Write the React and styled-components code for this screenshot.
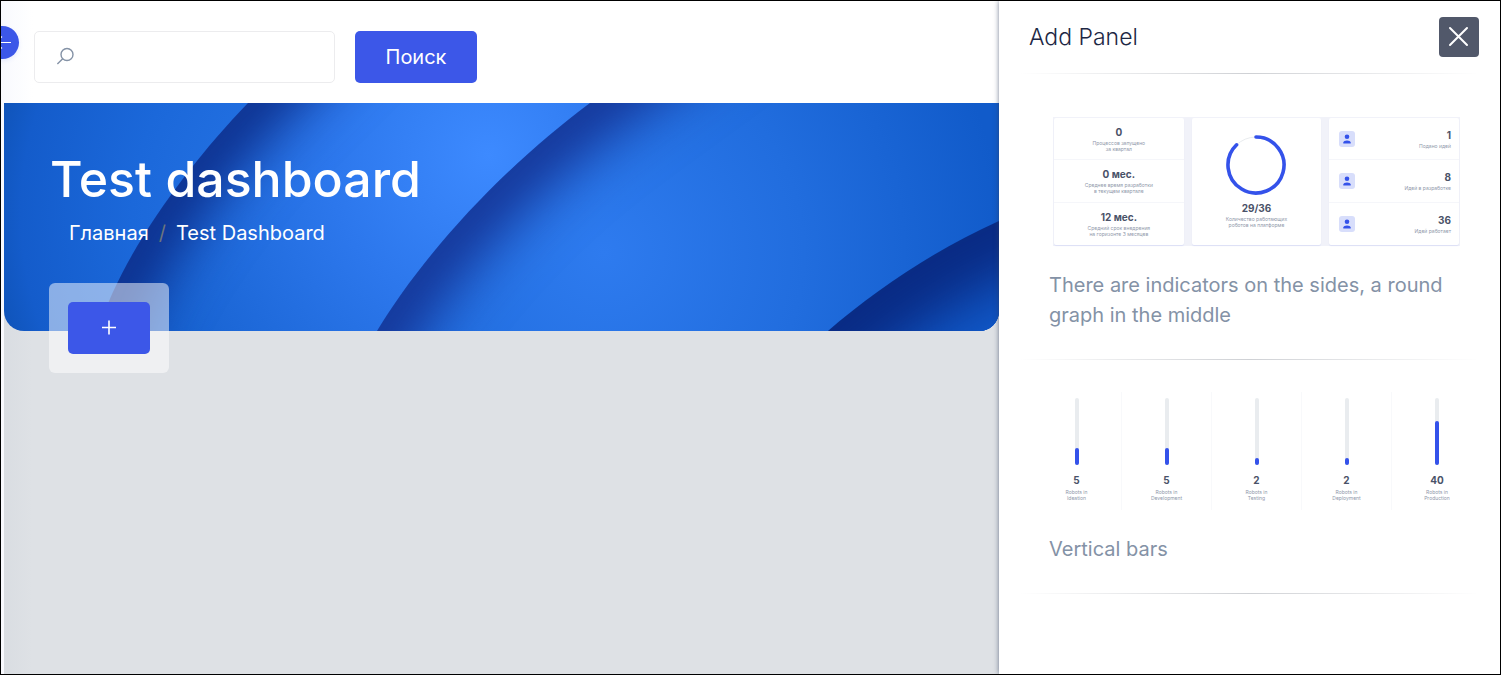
import React from "react";
import styled, { createGlobalStyle } from "styled-components";

const GlobalStyle = createGlobalStyle`
  *, *::before, *::after { box-sizing: border-box; }
  body {
    margin: 0;
    font-family: Inter, "Liberation Sans", sans-serif;
    font-size: 20px;
    line-height: 30px;
    color: #3c4858;
    background: #fff;
  }
  button, input { font: inherit; }
  h1, h2, p, ol, ul, dl, dd { margin: 0; padding: 0; }
  ol, ul { list-style: none; }
`;

const Page = styled.div`
  position: relative;
  display: grid;
  grid-template-columns: minmax(0, 1fr) 501px;
  min-height: 100vh;
  border: 1px solid #000;
  overflow: hidden;
`;

const Main = styled.main`
  display: flex;
  flex-direction: column;
  min-width: 0;
  padding-left: 3px;
  background: linear-gradient(90deg, #f8f9fe, #fff 32px);
`;

const SidebarToggle = styled.button`
  position: absolute;
  top: 25px;
  left: -15px;
  width: 33px;
  height: 33px;
  padding: 0;
  border: 0;
  border-radius: 50%;
  background: #3c57e8;
  color: #fff;
  box-shadow: 0 2px 4px rgba(60, 87, 232, 0.1);
  svg { display: block; }
`;

const TopBar = styled.form`
  display: flex;
  gap: 20px;
  padding: 30px 30px 20px;
`;

const SearchBox = styled.label`
  display: flex;
  align-items: center;
  width: 301px;
  height: 52px;
  padding: 0 20px;
  gap: 10px;
  border: 1px solid #ececee;
  border-radius: 5px;
  background: #fff;
  color: #8492a6;
  svg { flex: none; }
`;

const SearchInput = styled.input`
  flex: 1;
  min-width: 0;
  border: 0;
  outline: 0;
  background: none;
`;

const PrimaryButton = styled.button`
  display: flex;
  align-items: center;
  justify-content: center;
  width: ${(p) => p.$width}px;
  height: 52px;
  padding: 0;
  border: 0;
  border-radius: 5px;
  background: #3c57e8;
  color: #fff;
`;

const Content = styled.div`
  flex: 1;
  background: linear-gradient(90deg, #d9dde2, #dee1e5 28px);
`;

const Banner = styled.header`
  position: relative;
  padding: 46px 46px 83px;
  border-radius: 0 0 20px 20px;
  overflow: hidden;
  color: #fff;
`;

const BannerArt = styled.svg`
  position: absolute;
  inset: 0;
  width: 100%;
  height: 100%;
`;

const Title = styled.h1`
  position: relative;
  font-size: 50px;
  line-height: 60px;
  font-weight: 500;
`;

const Breadcrumbs = styled.ol`
  position: relative;
  display: flex;
  gap: 10px;
  margin-top: 9px;
  padding-left: 19px;
`;

const Crumb = styled.a`
  color: #fff;
  text-decoration: none;
`;

const Slash = styled.li`
  color: #6c757d;
`;

const AddSlot = styled.div`
  position: relative;
  width: 120px;
  margin: -48px 0 0 45px;
  padding: 19px;
  border-radius: 6px;
  background: rgba(255, 255, 255, 0.5);
`;

const Drawer = styled.aside`
  position: relative;
  padding: 0 21px 0 20px;
  background: #fff;
  box-shadow: 0 0 5px rgba(45, 60, 90, 0.65);
`;

const DrawerHeader = styled.div`
  display: flex;
  align-items: center;
  justify-content: space-between;
  padding: 16px 0 16px 10px;
`;

const DrawerTitle = styled.h2`
  font-size: 23px;
  line-height: 40px;
  font-weight: 300;
  color: #1d2744;
`;

const CloseButton = styled.button`
  width: 40px;
  height: 40px;
  padding: 0;
  border: 0;
  border-radius: 4px;
  background: #51586a;
  color: #fff;
  svg { display: block; }
`;

const Divider = styled.hr`
  height: 1px;
  margin: 0;
  border: 0;
  background: linear-gradient(90deg, transparent, #cfd1d5, transparent);
`;

const Option = styled.button`
  display: block;
  width: 100%;
  padding: ${(p) => p.$top}px 20px 29px 30px;
  border: 0;
  background: none;
  color: #8492a6;
  text-align: left;
`;

const OptionText = styled.span`
  display: block;
  margin: 24px -4px 0 0;
  line-height: 30px;
`;

const Tiles = styled.span`
  display: grid;
  grid-template-columns: repeat(3, 1fr);
  gap: 8px;
  height: 129px;
  margin: 0 -1px 0 4px;
  padding: 1px;
  background: #f1f2f9;
`;

const Tile = styled.span`
  display: grid;
  grid-template-rows: repeat(3, 1fr);
  border-radius: 2px;
  background: #fff;
  box-shadow: 0 1px 1px #dcdff5;
`;

const TileRow = styled.span`
  display: flex;
  flex-direction: column;
  align-items: center;
  padding-top: 7px;
  &:not(:last-child) { border-bottom: 1px solid #f5f6fa; }
`;

const PersonRow = styled.span`
  display: flex;
  align-items: center;
  justify-content: space-between;
  padding: 0 8px 0 10px;
  &:not(:last-child) { border-bottom: 1px solid #f5f6fa; }
`;

const RightText = styled.span`
  display: flex;
  flex-direction: column;
  align-items: flex-end;
`;

const RingTile = styled.span`
  display: flex;
  flex-direction: column;
  align-items: center;
  padding-top: 16px;
  border-radius: 2px;
  background: #fff;
  box-shadow: 0 1px 1px #dcdff5;
  svg { flex: none; margin-bottom: 5px; }
`;

const Value = styled.span`
  font-size: 10px;
  line-height: 14px;
  font-weight: 700;
  color: #4a5268;
`;

const Caption = styled.span`
  margin-top: ${(p) => p.$gap || 0}px;
  font-size: 5px;
  line-height: 6px;
  text-align: center;
  white-space: pre-line;
  color: #8f98aa;
`;

const Bars = styled.span`
  display: grid;
  grid-template-columns: repeat(5, 1fr);
  height: 118px;
  margin: 0 -23px 0 -17px;
`;

const BarCell = styled.span`
  display: flex;
  flex-direction: column;
  align-items: center;
  padding-top: 6px;
  &:not(:last-child) { border-right: 1px solid #f8f9fb; }
`;

const Track = styled.span`
  display: flex;
  align-items: flex-end;
  width: 4px;
  height: 67px;
  margin-bottom: 8px;
  border-radius: 2px;
  background: #e9ecef;
`;

const Fill = styled.span`
  width: 4px;
  border-radius: 2px;
  background: #3452ea;
`;

const months = [
  ["0", "Процессов запущено\nза квартал"],
  ["0 мес.", "Среднее время разработки\nв текущем квартале"],
  ["12 мес.", "Средний срок внедрения\nна горизонте 3 месяцев"],
];

const ideas = [
  ["1", "Подано идей"],
  ["8", "Идей в разработке"],
  ["36", "Идей работает"],
];

const robots = [
  [5, "Ideation", 17],
  [5, "Development", 17],
  [2, "Testing", 7],
  [2, "Deployment", 7],
  [40, "Production", 44],
];

const EDGES = [
  "M244 0 C185 61 118 150 94 228",
  "M586 0 C500 64 420 150 373 228",
  "M824 228 C870 188 932 146 995 118",
];

function Waves() {
  return (
    <BannerArt viewBox="0 0 995 228" preserveAspectRatio="none" aria-hidden="true">
      <defs>
        <radialGradient id="base" gradientUnits="userSpaceOnUse" cx="350" cy="110" r="370">
          <stop offset="0" stopColor="#2c7aeb" />
          <stop offset="0.6" stopColor="#1b68da" />
          <stop offset="0.9" stopColor="#145ccb" />
          <stop offset="1" stopColor="#0f53b8" />
        </radialGradient>
        <radialGradient id="second" gradientUnits="userSpaceOnUse" cx="485" cy="52" r="360">
          <stop offset="0" stopColor="#3d8aff" />
          <stop offset="0.45" stopColor="#2c77ec" />
          <stop offset="1" stopColor="#1762d0" />
        </radialGradient>
        <radialGradient id="third" gradientUnits="userSpaceOnUse" cx="600" cy="150" r="400">
          <stop offset="0" stopColor="#2e7bef" />
          <stop offset="0.5" stopColor="#216dde" />
          <stop offset="1" stopColor="#115bca" />
        </radialGradient>
        <filter id="soft" filterUnits="userSpaceOnUse" x="-150" y="-300" width="1400" height="900" colorInterpolationFilters="sRGB">
          <feGaussianBlur stdDeviation="28" />
        </filter>
        <clipPath id="clip0"><path d={`${EDGES[0]} H995 V0 Z`} /></clipPath>
        <clipPath id="clip1"><path d={`${EDGES[1]} H995 V0 Z`} /></clipPath>
        <clipPath id="clip2"><path d={`${EDGES[2]} V228 Z`} /></clipPath>
      </defs>
      <rect width="995" height="228" fill="url(#base)" />
      <g clipPath="url(#clip0)">
        <rect width="995" height="228" fill="url(#second)" />
        <path d="M364 -120 L244 0 C185 61 118 150 94 228 L60 340" fill="none" stroke="#0c2c88" strokeWidth="72" filter="url(#soft)" />
      </g>
      <g clipPath="url(#clip1)">
        <rect width="995" height="228" fill="url(#third)" />
        <path d="M730 -105 L586 0 C500 64 420 150 373 228 L310 340" fill="none" stroke="#143293" strokeWidth="72" filter="url(#soft)" />
      </g>
      <g clipPath="url(#clip2)">
        <rect width="995" height="228" fill="#1058c8" />
        <path d="M700 340 L824 228 C870 188 932 146 995 118 L1120 64" fill="none" stroke="#092a83" strokeWidth="110" filter="url(#soft)" />
      </g>
    </BannerArt>
  );
}

function Person() {
  return (
    <svg width="16" height="16" viewBox="0 0 16 16" aria-hidden="true">
      <rect width="16" height="16" rx="3" fill="#d8defb" />
      <circle cx="8" cy="5.8" r="2.3" fill="#3452ea" />
      <path d="M4.3 12.6 V11.5 C4.3 8.8 11.7 8.8 11.7 11.5 V12.6 Z" fill="#3452ea" />
    </svg>
  );
}

export default function App() {
  return (
    <>
      <GlobalStyle />
      <Page>
        <Main>
          <TopBar onSubmit={(e) => e.preventDefault()}>
            <SearchBox>
              <svg width="20" height="20" viewBox="0 0 20 20" fill="none" stroke="currentColor" strokeWidth="1.4" aria-hidden="true">
                <circle cx="12" cy="7.5" r="6" />
                <path d="M7.7 11.8 L2.4 17" />
              </svg>
              <SearchInput type="text" aria-label="Поиск" />
            </SearchBox>
            <PrimaryButton type="submit" $width={122}>Поиск</PrimaryButton>
          </TopBar>
          <Content>
            <Banner>
              <Waves />
              <Title>Test dashboard</Title>
              <Breadcrumbs>
                <li><Crumb href="#">Главная</Crumb></li>
                <Slash aria-hidden="true">/</Slash>
                <li><Crumb href="#">Test Dashboard</Crumb></li>
              </Breadcrumbs>
            </Banner>
            <AddSlot>
              <PrimaryButton type="button" $width={82} aria-label="Add">
                <svg width="16" height="16" viewBox="0 0 16 16" stroke="currentColor" strokeWidth="1.6" aria-hidden="true">
                  <path d="M8 0.5 V14.5 M1 7.5 H15" />
                </svg>
              </PrimaryButton>
            </AddSlot>
          </Content>
        </Main>
        <SidebarToggle type="button" aria-label="Toggle sidebar">
          <svg width="33" height="33" viewBox="0 0 33 33" fill="none" stroke="currentColor" strokeWidth="1.2" aria-hidden="true">
            <path d="M25 16.5 H10 M16 10.5 L10 16.5 L16 22.5" />
          </svg>
        </SidebarToggle>
        <Drawer>
          <DrawerHeader>
            <DrawerTitle>Add Panel</DrawerTitle>
            <CloseButton type="button" aria-label="Close">
              <svg width="40" height="40" viewBox="0 0 40 40" stroke="currentColor" strokeWidth="2" strokeLinecap="round" aria-hidden="true">
                <path d="M11 11 L28 28 M28 11 L11 28" />
              </svg>
            </CloseButton>
          </DrawerHeader>
          <Divider />
          <Option type="button" $top={43}>
            <Tiles>
              <Tile>
                {months.map(([value, text]) => (
                  <TileRow key={value}>
                    <Value>{value}</Value>
                    <Caption $gap={1}>{text}</Caption>
                  </TileRow>
                ))}
              </Tile>
              <RingTile>
                <svg width="62" height="62" viewBox="0 0 62 62" fill="none" aria-hidden="true">
                  <circle cx="31" cy="31" r="28" stroke="#e9ecef" strokeWidth="1" />
                  <path d="M31 3 A28 28 0 1 1 11.6 10.8" stroke="#3452ea" strokeWidth="3.6" strokeLinecap="round" />
                </svg>
                <Value>29/36</Value>
                <Caption $gap={1}>{"Количество работающих\nроботов на платформе"}</Caption>
              </RingTile>
              <Tile>
                {ideas.map(([value, text]) => (
                  <PersonRow key={value}>
                    <Person />
                    <RightText>
                      <Value>{value}</Value>
                      <Caption $gap={1}>{text}</Caption>
                    </RightText>
                  </PersonRow>
                ))}
              </Tile>
            </Tiles>
            <OptionText>There are indicators on the sides, a round graph in the middle</OptionText>
          </Option>
          <Divider />
          <Option type="button" $top={32}>
            <Bars>
              {robots.map(([value, name, height]) => (
                <BarCell key={name}>
                  <Track><Fill style={{ height }} /></Track>
                  <Value>{value}</Value>
                  <Caption $gap={2}>{`Robots in\n${name}`}</Caption>
                </BarCell>
              ))}
            </Bars>
            <OptionText>Vertical bars</OptionText>
          </Option>
          <Divider />
        </Drawer>
      </Page>
    </>
  );
}
